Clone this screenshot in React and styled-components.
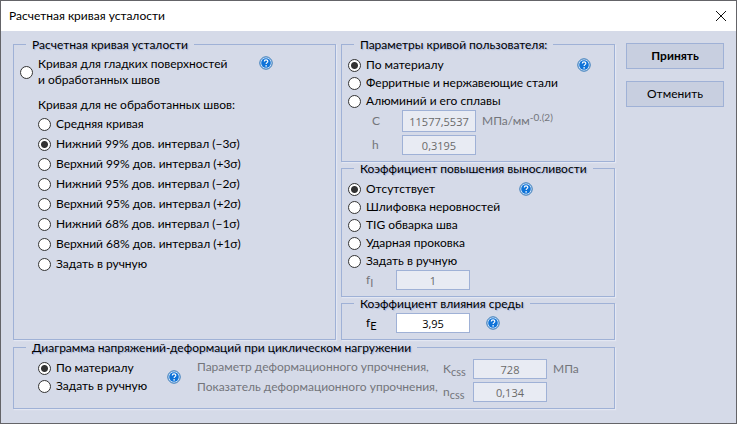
import React, { useState } from 'react'
import styled, { createGlobalStyle } from 'styled-components'

const GlobalStyle = createGlobalStyle`
  * {
    box-sizing: border-box;
  }

  body {
    margin: 0;
    background: #d5dae8;
    font-family: Lato, 'Open Sans', sans-serif;
    font-size: 12px;
    line-height: 16px;
    color: #000;
  }

  button,
  input {
    font: inherit;
  }
`

const Window = styled.div`
  display: flex;
  flex-direction: column;
  min-height: 100vh;
  border: 1px solid #646468;
  background: #d5dae8;
`

const TitleBar = styled.header`
  display: flex;
  align-items: center;
  justify-content: space-between;
  height: 30px;
  padding: 0 9px 0 8px;
  background: #fff;
`

const WindowTitle = styled.h1`
  margin: 0;
  font-size: 12px;
  font-weight: 400;
`

const CloseButton = styled.button`
  display: flex;
  padding: 0;
  border: 0;
  background: none;
`

const Content = styled.main`
  display: grid;
  grid-template-columns: minmax(0, 1fr) 98px;
  column-gap: 11px;
  padding: 7px 12px 12px;
`

const Groups = styled.div`
  display: grid;
  grid-template-columns: minmax(0, 323fr) minmax(0, 274fr);
  column-gap: 5px;
  row-gap: 1px;
`

const Column = styled.div`
  display: flex;
  flex-direction: column;
`

const Group = styled.fieldset`
  min-width: 0;
  margin: 0;
  padding: ${({ $top }) => $top || 6}px 6px 6px;
  border: 1px solid #9fb1d6;
  box-shadow: 1px 1px 1px #e3e7f2;
  grid-column: ${({ $wide }) => ($wide ? '1 / -1' : 'auto')};
`

const Legend = styled.legend`
  height: 12px;
  margin-left: 6px;
  padding: 0 6px;
  line-height: 14px;
  white-space: nowrap;
  text-shadow: 1px 1px 1px #9fb0da;
`

const Row = styled.div`
  display: flex;
  align-items: ${({ $align }) => $align || 'center'};
  justify-content: space-between;
  padding-right: ${({ $end }) => $end}px;
`

const RadioLabel = styled.label`
  display: flex;
  align-items: center;
  gap: 5px;
  min-height: ${({ $height }) => $height || 18}px;
  white-space: nowrap;
`

const RadioInput = styled.input`
  appearance: none;
  flex: none;
  width: 13px;
  height: 13px;
  margin: 0;
  border: 1px solid #333;
  border-radius: 50%;
  background: #fff;

  &:checked {
    background: radial-gradient(circle, #333 3px, #fff 4px);
  }
`

const Nested = styled.div`
  padding-left: 18px;
`

const Caption = styled.div`
  margin: 9px 0 1px;
`

const Field = styled.div`
  display: grid;
  grid-template-columns: 30px 74px auto;
  align-items: center;
  padding-left: ${({ $indent }) => $indent}px;
  margin-top: ${({ $top }) => $top || 0}px;
`

const FieldLabel = styled.label`
  color: ${({ $muted }) => ($muted ? '#73757b' : '#000')};
  white-space: nowrap;
`

const Sub = styled.sub`
  font-size: 11px;
  line-height: 0;
  vertical-align: -3px;
`

const Sup = styled.sup`
  font-size: 10px;
  line-height: 0;
  vertical-align: 4px;
`

const TextInput = styled.input`
  width: 74px;
  height: ${({ $height }) => $height || 20}px;
  padding: 0;
  border: 1px solid #9fb1d6;
  border-radius: 0;
  background: #fff;
  color: #000;
  font-family: 'Open Sans', sans-serif;
  font-size: 11px;
  text-align: center;

  &:disabled {
    background: #e8ebf3;
    color: #6a6a6a;
  }
`

const Unit = styled.span`
  padding-left: 6px;
  color: #73757b;
`

const HelpButton = styled.button`
  display: flex;
  flex: none;
  padding: 0;
  border: 0;
  background: none;
`

const FieldHelp = styled.div`
  padding-left: 16px;
`

const Diagram = styled.div`
  display: grid;
  grid-template-columns: 159px minmax(0, 1fr) auto;
  align-items: start;
  padding-left: 18px;
`

const Descriptions = styled.div`
  display: grid;
  row-gap: 4px;
  color: #73757b;
  white-space: nowrap;
`

const Constants = styled.div`
  display: grid;
  grid-template-columns: 30px 74px 61px;
  row-gap: 3px;
  align-items: center;
`

const Actions = styled.div`
  display: flex;
  flex-direction: column;
  gap: 12px;
  padding-top: 5px;
`

const ActionButton = styled.button`
  height: 26px;
  padding: 0;
  border: 1px solid #9fb1d6;
  background: #c8cfe0;
  color: #000;
  font-weight: ${({ $primary }) => ($primary ? 700 : 400)};
`

const INTERVALS = [
  'Средняя кривая',
  'Нижний 99% дов. интервал (−3σ)',
  'Верхний 99% дов. интервал (+3σ)',
  'Нижний 95% дов. интервал (−2σ)',
  'Верхний 95% дов. интервал (+2σ)',
  'Нижний 68% дов. интервал (−1σ)',
  'Верхний 68% дов. интервал (+1σ)',
  'Задать в ручную',
]

const TREATMENTS = ['Шлифовка неровностей', 'TIG обварка шва', 'Ударная проковка', 'Задать в ручную']

function Help() {
  return (
    <HelpButton type="button" aria-label="Справка">
      <svg width="14" height="14" viewBox="0 0 14 14" fill="none">
        <circle cx="7" cy="7" r="6.2" fill="#d9e9fa" stroke="#2a72b5" />
        <circle cx="7" cy="7" r="4.8" fill="#0f73d8" />
        <path d="M5.3 5.6c0-2.3 3.5-2.2 3.5-.2 0 1.2-1.7 1.3-1.7 2.6" stroke="#fff" strokeWidth="1.2" />
        <circle cx="7.1" cy="9.9" r=".8" fill="#fff" />
      </svg>
    </HelpButton>
  )
}

function Radio({ name, value, selected, onSelect, height, children }) {
  return (
    <RadioLabel $height={height}>
      <RadioInput type="radio" name={name} checked={selected === value} onChange={() => onSelect(value)} />
      <span>{children || value}</span>
    </RadioLabel>
  )
}

export default function App() {
  const [curve, setCurve] = useState(INTERVALS[1])
  const [params, setParams] = useState('По материалу')
  const [treatment, setTreatment] = useState('Отсутствует')
  const [diagram, setDiagram] = useState('По материалу')
  const [environment, setEnvironment] = useState('3,95')

  const curveProps = { name: 'curve', selected: curve, onSelect: setCurve }
  const paramsProps = { name: 'params', selected: params, onSelect: setParams }
  const treatmentProps = { name: 'treatment', selected: treatment, onSelect: setTreatment }
  const diagramProps = { name: 'diagram', selected: diagram, onSelect: setDiagram }

  return (
    <>
      <GlobalStyle />
      <Window>
        <TitleBar>
          <WindowTitle>Расчетная кривая усталости</WindowTitle>
          <CloseButton type="button" aria-label="Закрыть">
            <svg width="12" height="12" viewBox="0 0 12 12" stroke="#111" fill="none">
              <path d="M1 1l10 10M11 1L1 11" />
            </svg>
          </CloseButton>
        </TitleBar>

        <Content>
          <Groups>
            <Group>
              <Legend>Расчетная кривая усталости</Legend>
              <Row $align="flex-start" $end={56}>
                <Radio {...curveProps} value="smooth" height={32}>
                  Кривая для гладких поверхностей
                  <br />и обработанных швов
                </Radio>
                <Help />
              </Row>
              <Nested>
                <Caption>Кривая для не обработанных швов:</Caption>
                {INTERVALS.map((label) => (
                  <Radio key={label} {...curveProps} value={label} height={20} />
                ))}
              </Nested>
            </Group>

            <Column>
              <Group>
                <Legend>Параметры кривой пользователя:</Legend>
                <Row $end={17}>
                  <Radio {...paramsProps} value="По материалу" />
                  <Help />
                </Row>
                <Radio {...paramsProps} value="Ферритные и нержавеющие стали" />
                <Radio {...paramsProps} value="Алюминий и его сплавы" />
                <Field $indent={24}>
                  <FieldLabel htmlFor="c" $muted>
                    C
                  </FieldLabel>
                  <TextInput id="c" $height={22} value="11577,5537" disabled readOnly />
                  <Unit>
                    МПа/мм<Sup>-0.(2)</Sup>
                  </Unit>
                </Field>
                <Field $indent={24} $top={3}>
                  <FieldLabel htmlFor="h" $muted>
                    h
                  </FieldLabel>
                  <TextInput id="h" value="0,3195" disabled readOnly />
                </Field>
              </Group>

              <Group>
                <Legend>Коэффициент повышения выносливости</Legend>
                <Row $end={75}>
                  <Radio {...treatmentProps} value="Отсутствует" />
                  <Help />
                </Row>
                {TREATMENTS.map((label) => (
                  <Radio key={label} {...treatmentProps} value={label} />
                ))}
                <Field $indent={18}>
                  <FieldLabel htmlFor="fi" $muted>
                    f<Sub>I</Sub>
                  </FieldLabel>
                  <TextInput id="fi" value="1" disabled readOnly />
                </Field>
              </Group>

              <Group $top={4}>
                <Legend>Коэффициент влияния среды</Legend>
                <Field $indent={18}>
                  <FieldLabel htmlFor="fe">
                    f<Sub>E</Sub>
                  </FieldLabel>
                  <TextInput id="fe" value={environment} onChange={(e) => setEnvironment(e.target.value)} />
                  <FieldHelp>
                    <Help />
                  </FieldHelp>
                </Field>
              </Group>
            </Column>

            <Group $wide>
              <Legend>Диаграмма напряжений-деформаций при циклическом нагружении</Legend>
              <Diagram>
                <Row $end={16}>
                  <div>
                    <Radio {...diagramProps} value="По материалу" />
                    <Radio {...diagramProps} value="Задать в ручную" />
                  </div>
                  <Help />
                </Row>
                <Descriptions>
                  <span>Параметр деформационного упрочнения,</span>
                  <span>Показатель деформационного упрочнения,</span>
                </Descriptions>
                <Constants>
                  <FieldLabel htmlFor="kcss" $muted>
                    K<Sub>css</Sub>
                  </FieldLabel>
                  <TextInput id="kcss" value="728" disabled readOnly />
                  <Unit>МПа</Unit>
                  <FieldLabel htmlFor="ncss" $muted>
                    n<Sub>css</Sub>
                  </FieldLabel>
                  <TextInput id="ncss" value="0,134" disabled readOnly />
                </Constants>
              </Diagram>
            </Group>
          </Groups>

          <Actions>
            <ActionButton type="button" $primary>
              Принять
            </ActionButton>
            <ActionButton type="button">Отменить</ActionButton>
          </Actions>
        </Content>
      </Window>
    </>
  )
}
